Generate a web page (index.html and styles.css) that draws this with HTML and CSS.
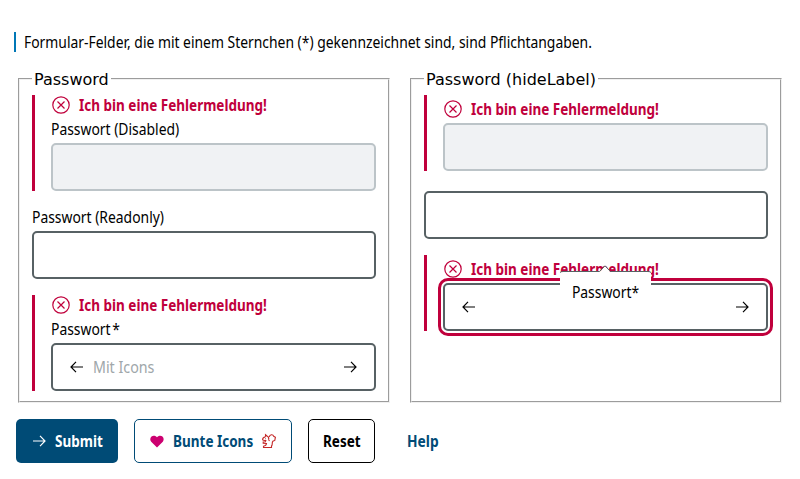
FILE: index.html
```html
<!DOCTYPE html>
<html lang="de">
<head>
<meta charset="utf-8">
<title>Password</title>
<link rel="stylesheet" href="styles.css">
</head>
<body>
<svg class="defs" width="0" height="0" aria-hidden="true">
  <symbol id="error" viewBox="0 0 18 18"><circle cx="9" cy="9" r="8.2"/><path d="M5.500 5.500l7 7M12.500 5.500l-7 7"/></symbol>
  <symbol id="left" viewBox="0 0 14 12"><path d="M13 6H1M6 .9L1 6l5 5.100"/></symbol>
  <symbol id="right" viewBox="0 0 14 12"><path d="M1 6h12M8 .9L13 6l-5 5.100"/></symbol>
</svg>
<form class="form">
  <p class="hint"><span class="text">Formular-Felder, die mit einem Sternchen (*) gekennzeichnet sind, sind Pflichtangaben.</span></p>
  <div class="columns">
    <fieldset class="group">
      <legend class="legend">Password</legend>
      <div class="field invalid">
        <div class="error"><svg class="error-icon"><use href="#error"/></svg><span class="text bold">Ich bin eine Fehlermeldung!</span></div>
        <div class="label"><span class="text">Passwort (Disabled)</span></div>
        <div class="input disabled"></div>
      </div>
      <div class="field">
        <div class="label"><span class="text">Passwort (Readonly)</span></div>
        <div class="input"></div>
      </div>
      <div class="field invalid">
        <div class="error"><svg class="error-icon"><use href="#error"/></svg><span class="text bold">Ich bin eine Fehlermeldung!</span></div>
        <div class="label"><span class="text">Passwort<span class="star">*</span></span></div>
        <div class="input"><svg class="arrow"><use href="#left"/></svg><span class="text placeholder">Mit Icons</span><svg class="arrow"><use href="#right"/></svg></div>
      </div>
    </fieldset>
    <fieldset class="group">
      <legend class="legend">Password (hideLabel)</legend>
      <div class="field invalid compact">
        <div class="error"><svg class="error-icon"><use href="#error"/></svg><span class="text bold">Ich bin eine Fehlermeldung!</span></div>
        <div class="input disabled"></div>
      </div>
      <div class="field unlabeled">
        <div class="input"></div>
      </div>
      <div class="field invalid compact">
        <div class="error"><svg class="error-icon"><use href="#error"/></svg><span class="text bold">Ich bin eine Fehlermeldung!</span></div>
        <div class="input focused"><svg class="arrow"><use href="#left"/></svg><svg class="arrow"><use href="#right"/></svg>
          <div class="tooltip"><svg class="tooltip-edge" viewBox="0 0 91 8"><path class="tip" d="M39 8L45 .8 51 8z"/><path d="M0 7.500Q1 6.500 3 6.500H39.500L45 .8 50.500 6.500H88Q90 6.500 91 7.500"/></svg><span class="text tooltip-text">Passwort*</span></div>
        </div>
      </div>
    </fieldset>
  </div>
  <div class="actions">
    <div class="button primary"><svg class="arrow"><use href="#right"/></svg><span class="text bold submit-text">Submit</span></div>
    <div class="button secondary"><svg class="heart" viewBox="0 0 14 13"><path d="M7 12.500L1.200 6.700C-1.500 3.500 2.500-1.700 7 2.300 11.500-1.700 15.500 3.500 12.800 6.700z"/></svg><span class="text bold icons-text">Bunte Icons</span><svg class="squirrel" viewBox="0 0 14 14"><path d="M3.500 2.800V.8l2 1.700C6.800 3 7 4.200 6.500 5.500M3.500 2.800C1.500 3.300.5 4.500.6 5.800 1.500 6.600 2.500 6.400 3.800 6.600L3.200 8h-2v1.200l3.300.3C4.300 11 3 12 1.500 12.200v1.300h8V12C11 10.500 9.600 8.700 10.800 7.300l2-.9.6-3.200-1.700-.9C11 .2 7.800.2 7.300 3M3 4.700h.8M6.500 5.500l1 1.500"/></svg></div>
    <div class="button neutral"><span class="text bold reset-text">Reset</span></div>
    <div class="button ghost"><span class="text bold help-text">Help</span></div>
  </div>
</form>
</body>
</html>
```

FILE: styles.css
```css
* { box-sizing: border-box; }
body { margin: 0; background: #fff; color: #000; font: 15.5px/20px "Noto Sans", sans-serif; }
svg { display: block; flex: none; fill: none; stroke: currentColor; stroke-width: 1.2; overflow: visible; }
.defs { position: absolute; }
.form { padding: 32px 16px 0; }
.text { display: inline-block; white-space: nowrap; transform: translateY(.4px) scaleX(.896); transform-origin: left; }
.bold { font-weight: 700; transform: translateY(.4px) scaleX(.871); }
.hint { height: 20px; margin: 0 0 17px -2px; padding-left: 8px; border-left: 2px solid #0077b6; }
.columns { display: grid; grid-template-columns: 1fr 1fr; gap: 16px; }
.group { min-width: 0; height: 334px; margin: 0 2px; padding: 7px 12px 0; border: 2px groove #f0f0f0; }
.legend { height: 19px; padding: 1px 2px 0; font: 16px/19px "DejaVu Sans", sans-serif; }
.field { margin-bottom: 16px; }
.invalid { padding-left: 16px; border-left: 3px solid #c0003c; }
.error { display: flex; align-items: center; gap: 9px; height: 20px; padding-left: 1px; color: #c0003c; }
.error-icon { width: 18px; height: 18px; }
.label { height: 24px; }
.invalid .label { height: 28px; padding-top: 4px; }
.compact .error { height: 28px; }
.unlabeled { padding-top: 4px; }
.input { position: relative; display: flex; align-items: center; justify-content: space-between; height: 48px; padding: 0 17px; border: 2px solid #576164; border-radius: 5px; }
.disabled { background: #f0f2f4; border-color: #bcc4c8; }
.focused { outline: 3px solid #c0003c; outline-offset: 2px; }
.arrow { width: 14px; height: 12px; }
.placeholder { flex: 1; margin-left: 9px; color: #a0a7aa; transform: translateY(.4px) scaleX(.92); }
.tooltip { position: absolute; left: 115px; top: -20px; width: 91px; height: 42px; padding-top: 17px; text-align: center; background: linear-gradient(transparent 7px, #fff 7px); }
.tooltip-edge { position: absolute; left: 0; top: 0; width: 91px; height: 8px; stroke: #576164; stroke-width: 1; }
.tooltip-text { transform-origin: center; }
.tip { fill: #fff; stroke: none; }
.star { margin-left: 2px; }
.actions { display: flex; gap: 16px; margin-top: 16px; }
.button { display: flex; align-items: center; justify-content: center; gap: 9px; height: 44px; border: 1px solid transparent; border-radius: 5px; }
.primary { width: 102px; background: #004b76; color: #fff; }
.secondary { width: 158px; color: #004b76; border-color: #004b76; }
.neutral { width: 67px; border-color: #000; }
.ghost { width: 63px; color: #004b76; }
.submit-text { width: 48px; }
.icons-text { width: 80px; }
.reset-text { width: 37px; }
.help-text { width: 32px; transform: translateY(.4px) scaleX(.89); }
.heart { width: 14px; height: 13px; fill: #cc0070; stroke: none; }
.squirrel { width: 14px; height: 14px; color: #c42828; stroke-width: 1.1; }
```
